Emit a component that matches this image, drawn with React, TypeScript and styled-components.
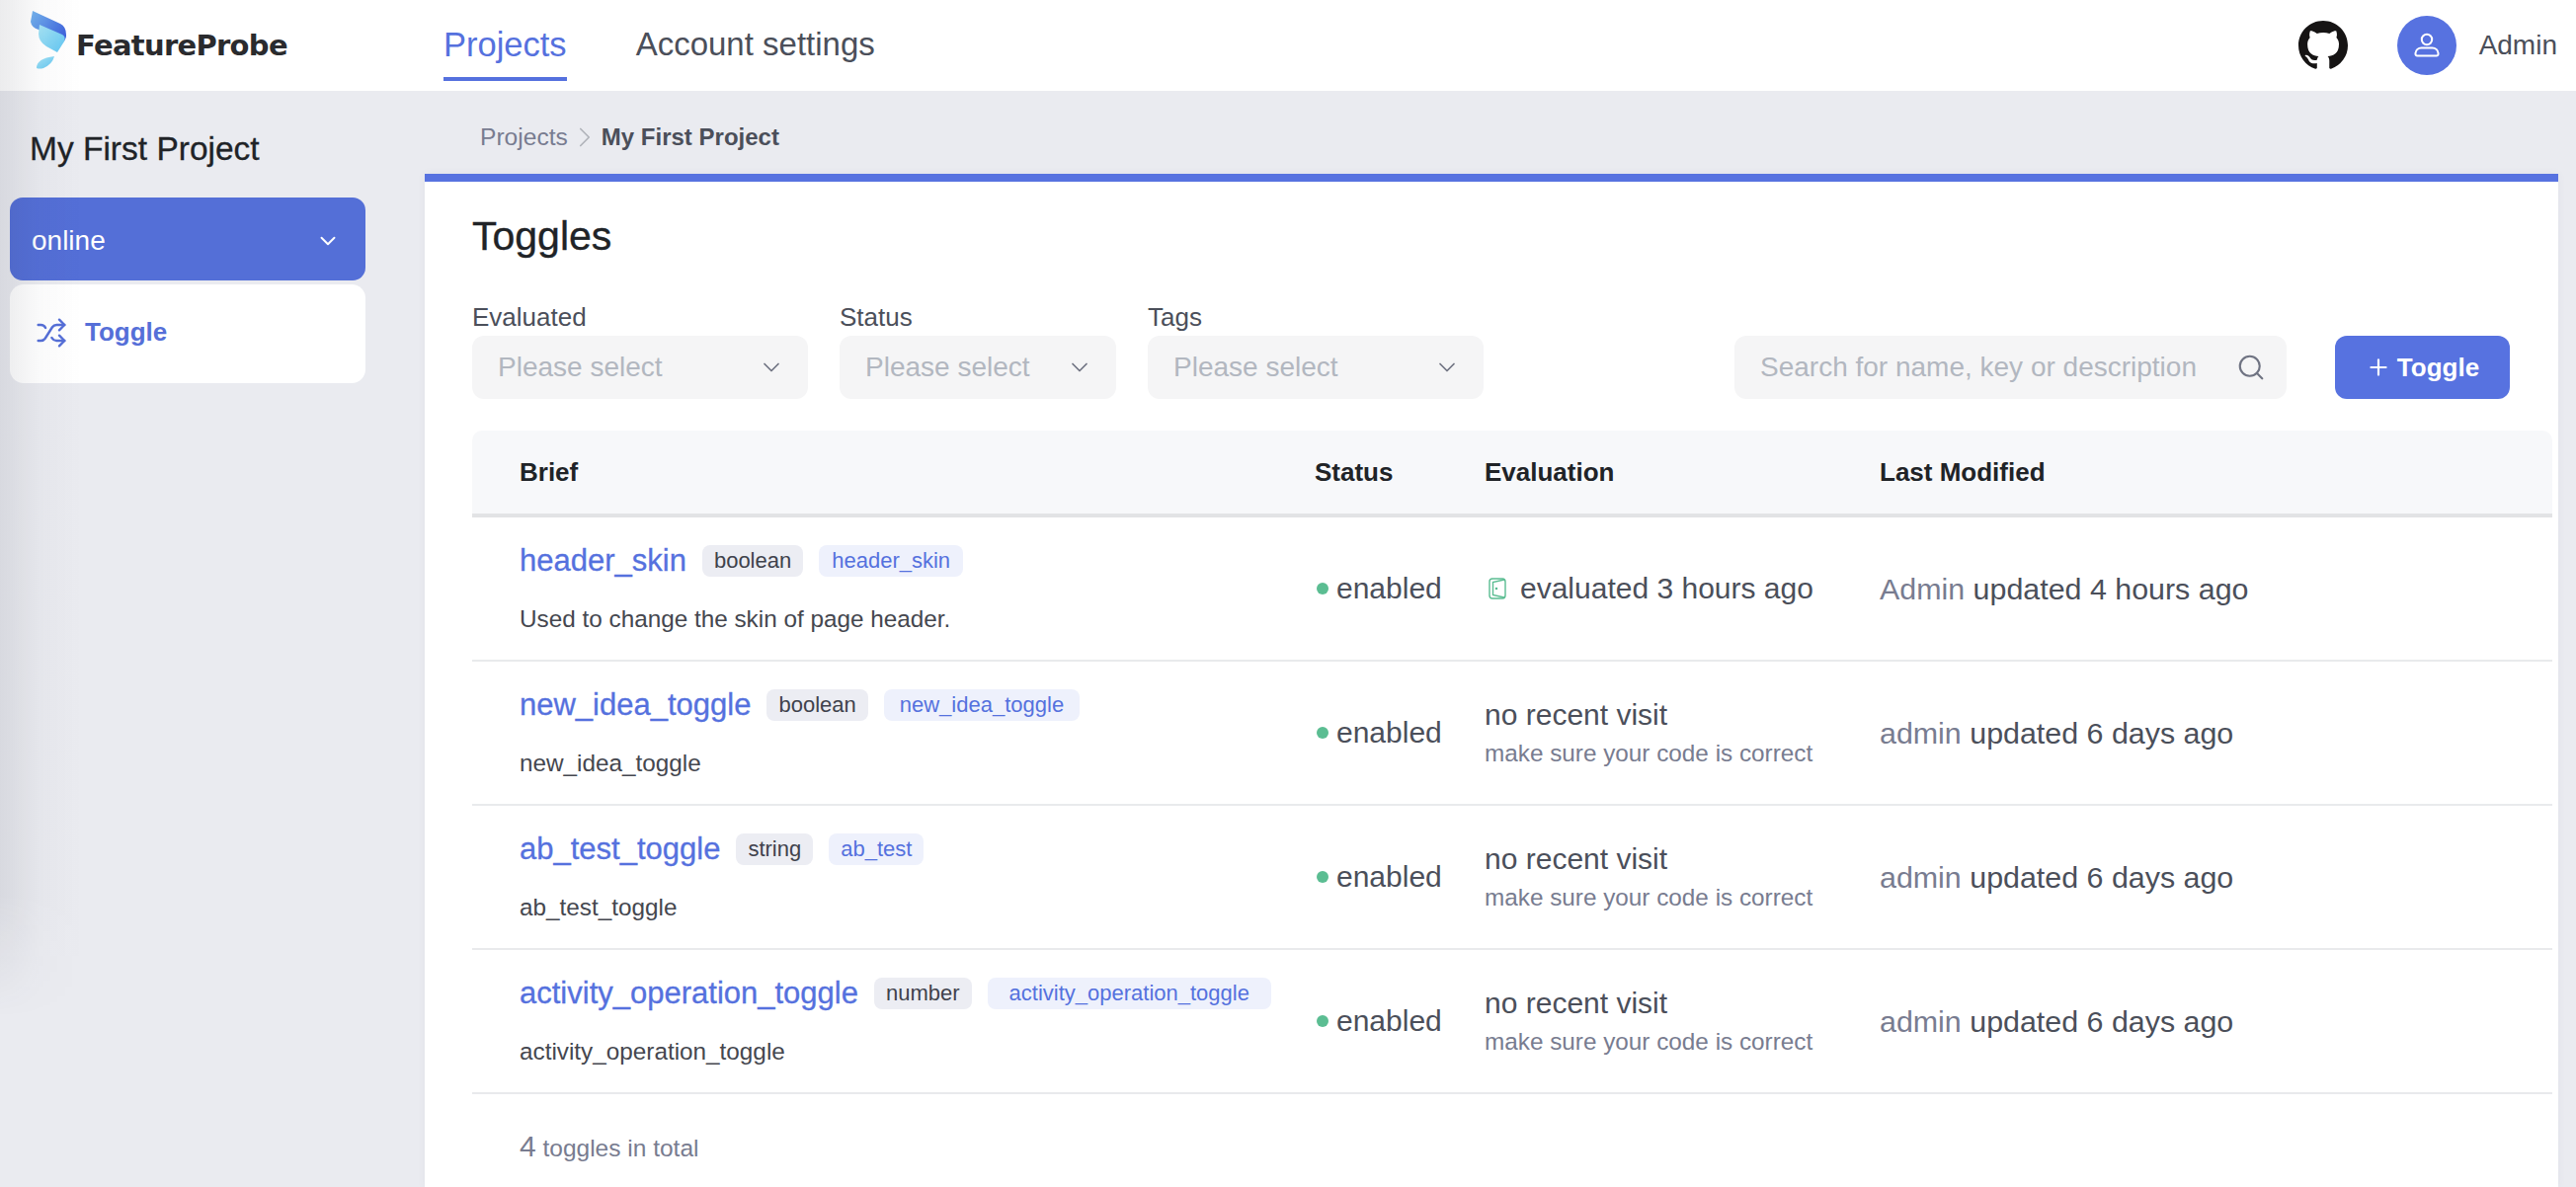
import React from 'react';
import styled, { createGlobalStyle, css } from 'styled-components';
import { ChevronDown, ChevronRight, Plus, Search, Shuffle } from 'lucide-react';

const GlobalStyle = createGlobalStyle`
  html, body {
    margin: 0;
    padding: 0;
    background: #eaebf0;
  }
  body {
    font-family: "Liberation Sans", Arial, sans-serif;
    color: #202327;
  }
  * {
    box-sizing: border-box;
  }
`;

const Page = styled.div`
  position: relative;
  width: 2608px;
  height: 1202px;
  overflow: hidden;
  display: flex;
  flex-direction: column;
`;

const EdgeShade = styled.div`
  position: absolute;
  left: 0;
  top: 0;
  width: 84px;
  height: 1030px;
  pointer-events: none;
  background: linear-gradient(
    90deg,
    rgba(40, 44, 60, 0.09),
    rgba(40, 44, 60, 0.07) 14px,
    rgba(40, 44, 60, 0.025) 40px,
    rgba(40, 44, 60, 0)
  );
  mask-image: linear-gradient(180deg, #000 88%, transparent 100%);
`;

const Header = styled.header`
  height: 92px;
  flex: none;
  background: #fff;
  display: flex;
  align-items: center;
  padding: 0 19px 0 31px;
`;

const Logo = styled.div`
  width: 418px;
  display: flex;
  align-items: center;
  gap: 10px;
`;

const LogoIcon = styled.svg`
  margin-bottom: 10px;
  flex: none;
`;

const LogoText = styled.span`
  font-family: "DejaVu Sans", sans-serif;
  font-size: 29px;
  font-weight: 700;
  letter-spacing: -0.7px;
  color: #2a2b2e;
`;

const Nav = styled.nav`
  display: flex;
  align-items: center;
  gap: 70px;
  height: 100%;
`;

const NavItem = styled.a<{ $active?: boolean }>`
  position: relative;
  font-size: ${({ $active }) => ($active ? '34.5px' : '33px')};
  color: ${({ $active }) => ($active ? '#5571de' : '#4b4f5a')};
  padding-bottom: 2px;

  ${({ $active }) =>
    $active &&
    css`
      &::after {
        content: '';
        position: absolute;
        left: 0;
        right: 0;
        bottom: -15px;
        height: 4px;
        background: #5571de;
      }
    `}
`;

const HeaderRight = styled.div`
  margin-left: auto;
  display: flex;
  align-items: center;
`;

const GithubLink = styled.a`
  display: flex;
  margin-right: 50px;
  color: #161414;
`;

const Avatar = styled.div`
  width: 60px;
  height: 60px;
  border-radius: 50%;
  background: #5772e0;
  color: #fff;
  display: flex;
  align-items: center;
  justify-content: center;
  margin-right: 23px;
`;

const UserName = styled.span`
  font-size: 28px;
  color: #4b4f5a;
`;

const Body = styled.div`
  flex: 1;
  display: flex;
  min-height: 0;
`;

const Sidebar = styled.aside`
  width: 430px;
  flex: none;
  padding: 0 60px 0 10px;
`;

const ProjectName = styled.h2`
  margin: 0;
  height: 108px;
  padding: 10px 0 0 20px;
  display: flex;
  align-items: center;
  font-size: 33.5px;
  font-weight: 400;
  color: #202327;
  -webkit-text-stroke: 0.3px #202327;
`;

const EnvSelect = styled.div`
  height: 84px;
  border-radius: 13px;
  background: #546fd7;
  color: #fff;
  display: flex;
  align-items: center;
  justify-content: space-between;
  padding: 3px 25px 0 22px;
  font-size: 28px;
`;

const MenuCard = styled.div`
  margin-top: 4px;
  height: 100px;
  border-radius: 14px;
  background: #fff;
  display: flex;
  align-items: center;
  gap: 18px;
  padding: 0 0 3px 26px;
  color: #556fd8;
  font-size: 26px;
  font-weight: 700;
`;

const Main = styled.main`
  flex: 1;
  min-width: 0;
  margin-right: 18px;
  display: flex;
  flex-direction: column;
`;

const Breadcrumb = styled.div`
  height: 84px;
  flex: none;
  display: flex;
  align-items: center;
  padding: 10px 0 0 56px;
  font-size: 24.6px;
  color: #787c90;
`;

const CrumbChevron = styled(ChevronRight)`
  color: #b0b3ba;
`;

const CrumbCurrent = styled.span`
  font-size: 24px;
  font-weight: 700;
  color: #4b4f5a;
`;

const Panel = styled.section`
  flex: 1;
  background: #fff;
  border-top: 8px solid #5772e0;
  padding: 0 6px 0 48px;
  box-shadow: 0 0 8px rgba(90, 80, 130, 0.06);
`;

const Title = styled.h1`
  margin: 0;
  height: 92px;
  padding-top: 18px;
  display: flex;
  align-items: center;
  font-size: 41px;
  font-weight: 400;
  color: #202327;
  -webkit-text-stroke: 0.35px #202327;
`;

const Filters = styled.div`
  display: flex;
  align-items: flex-end;
  height: 128px;
`;

const Field = styled.div<{ $width: number }>`
  width: ${({ $width }) => $width}px;
  margin-right: 32px;
  flex: none;
`;

const FieldLabel = styled.div`
  font-size: 26px;
  line-height: 30px;
  margin-bottom: 4px;
  color: #4b4f5a;
`;

const inputBox = css`
  height: 64px;
  border-radius: 12px;
  background: #f5f5f6;
  display: flex;
  align-items: center;
  justify-content: space-between;
  font-size: 28px;
  color: #b2b7c0;
`;

const SelectBox = styled.div`
  ${inputBox}
  padding: 0 23px 0 26px;
`;

const SearchBox = styled.div`
  ${inputBox}
  width: 559px;
  margin-left: auto;
  padding: 0 21px 0 26px;
`;

const AddButton = styled.button`
  width: 177px;
  height: 64px;
  margin: 0 43px 0 49px;
  flex: none;
  border: 0;
  border-radius: 12px;
  background: #5772e0;
  color: #fff;
  font: 700 26px "Liberation Sans", Arial, sans-serif;
  display: flex;
  align-items: center;
  justify-content: center;
  gap: 6px;
`;

const Table = styled.div`
  margin-top: 32px;
`;

const columns = css`
  display: grid;
  grid-template-columns: 805px 172px 400px 1fr;
  padding-left: 48px;
`;

const TableHead = styled.div`
  ${columns}
  height: 88px;
  align-items: center;
  background: #f7f8fa;
  border-bottom: 4px solid #e2e3e5;
  border-radius: 10px 10px 0 0;
  font-size: 26px;
  font-weight: 700;
  color: #202327;
`;

const Row = styled.div`
  ${columns}
  height: 146px;
  align-items: center;
  border-bottom: 2px solid #e9eaec;
`;

const Brief = styled.div`
  display: flex;
  flex-direction: column;
  gap: 26px;
`;

const BriefTop = styled.div`
  display: flex;
  align-items: center;
  gap: 16px;
`;

const ToggleName = styled.a`
  font-size: 31px;
  line-height: 36px;
  color: #5571de;
  -webkit-text-stroke: 0.3px #5571de;
`;

const Tag = styled.span<{ $variant: 'type' | 'key'; $pad?: number }>`
  height: 32px;
  border-radius: 8px;
  display: flex;
  align-items: center;
  font-size: 22px;
  padding: 0 ${({ $pad }) => $pad ?? 12}px;
  background: ${({ $variant }) => ($variant === 'type' ? '#ecedf3' : '#eef1fc')};
  color: ${({ $variant }) => ($variant === 'type' ? '#3f424c' : '#5571de')};
`;

const Description = styled.div`
  font-size: 24.3px;
  line-height: 30px;
  color: #45474f;
`;

const StatusCell = styled.div`
  display: flex;
  align-items: center;
  gap: 8px;
  font-size: 30px;
  color: #4b4f5a;
`;

const Dot = styled.i`
  width: 12px;
  height: 12px;
  margin-left: 2px;
  border-radius: 50%;
  background: #5bbd92;
`;

const Evaluated = styled.div`
  display: flex;
  align-items: center;
  gap: 14px;
  font-size: 30px;
  color: #4b4f5a;
  padding-left: 4px;
`;

const NoVisit = styled.div`
  font-size: 30px;
  line-height: 36px;
  color: #4b4f5a;
`;

const NoVisitHint = styled.div`
  font-size: 24.3px;
  line-height: 32px;
  margin-top: 5px;
  color: #787c90;
`;

const Modified = styled.div`
  font-size: 30.4px;
  color: #4b4f5a;
`;

const Modifier = styled.span`
  color: #787c90;
`;

const Footer = styled.div`
  padding: 36px 0 0 48px;
  font-size: 24.5px;
  color: #787c90;
`;

const FooterCount = styled.span`
  font-size: 30px;
`;

const LogoMark = () => (
  <LogoIcon width="36" height="60" viewBox="0 0 36 60">
    <defs>
      <linearGradient id="logoBack" x1="0" y1="0" x2="1" y2="0.6">
        <stop offset="0" stopColor="#76b7f0" />
        <stop offset="1" stopColor="#4167dd" />
      </linearGradient>
      <linearGradient id="logoFront" x1="0" y1="0" x2="1" y2="1">
        <stop offset="0" stopColor="#a9e6f6" />
        <stop offset="1" stopColor="#62c6f2" />
      </linearGradient>
    </defs>
    <path d="M2 0 L30 13 Q36 16 36 24 L36 26 Q35 31 31 33 L8 19 Q1 17 0 11 Z" fill="url(#logoBack)" />
    <path d="M9 14 L32 24 Q36 26 34 31 L27 42 L16 36 Q8 31 8 23 Z" fill="url(#logoFront)" />
    <path d="M6 58 Q6 48 24 46 Q22 54 13 58 Q9 59 6 58 Z" fill="url(#logoFront)" />
  </LogoIcon>
);

const GithubMark = () => (
  <svg width="50" height="50" viewBox="0 0 16 16" fill="currentColor">
    <path d="M8 0C3.58 0 0 3.58 0 8c0 3.54 2.29 6.53 5.47 7.59.4.07.55-.17.55-.38 0-.19-.01-.82-.01-1.49-2.01.37-2.53-.49-2.69-.94-.09-.23-.48-.94-.82-1.13-.28-.15-.68-.52-.01-.53.63-.01 1.08.58 1.23.82.72 1.21 1.87.87 2.33.66.07-.52.28-.87.51-1.07-1.78-.2-3.64-.89-3.64-3.95 0-.87.31-1.59.82-2.15-.08-.2-.36-1.02.08-2.12 0 0 .67-.21 2.2.82.64-.18 1.32-.27 2-.27.68 0 1.36.09 2 .27 1.53-1.04 2.2-.82 2.2-.82.44 1.1.16 1.92.08 2.12.51.56.82 1.27.82 2.15 0 3.07-1.87 3.75-3.65 3.95.29.25.54.73.54 1.48 0 1.07-.01 1.93-.01 2.2 0 .21.15.46.55.38A8.013 8.013 0 0016 8c0-4.42-3.58-8-8-8z" />
  </svg>
);

const UserIcon = () => (
  <svg width="26" height="26" viewBox="0 0 26 26" fill="none" stroke="currentColor" strokeWidth="2">
    <circle cx="13" cy="7" r="5.2" />
    <path d="M7.5 15.5 h11 a6 6 0 0 1 6 5.5 a2 2 0 0 1 -2 2.5 H3.5 a2 2 0 0 1 -2 -2.5 a6 6 0 0 1 6 -5.5 z" />
  </svg>
);

const DoorIcon = () => (
  <svg width="18" height="22" viewBox="0 0 18 22" fill="none" stroke="#5bbd92" strokeWidth="1.4">
    <rect x="1" y="1" width="16" height="20" rx="3" />
    <path d="M16 2 L4.5 4.5 V17.5 L16 20" />
    <circle cx="8" cy="11" r="0.6" />
  </svg>
);

const toggles = [
  { name: 'header_skin', type: 'boolean', tag: 'header_skin', tagPad: 13, desc: 'Used to change the skin of page header.', who: 'Admin', when: '4 hours', evaluated: '3 hours' },
  { name: 'new_idea_toggle', type: 'boolean', tag: 'new_idea_toggle', tagPad: 16, desc: 'new_idea_toggle', who: 'admin', when: '6 days' },
  { name: 'ab_test_toggle', type: 'string', tag: 'ab_test', tagPad: 12, desc: 'ab_test_toggle', who: 'admin', when: '6 days' },
  { name: 'activity_operation_toggle', type: 'number', tag: 'activity_operation_toggle', tagPad: 22, desc: 'activity_operation_toggle', who: 'admin', when: '6 days' },
];

const filters = [
  { label: 'Evaluated', width: 340 },
  { label: 'Status', width: 280 },
  { label: 'Tags', width: 340 },
];

export default function App() {
  return (
    <Page>
      <GlobalStyle />
      <Header>
        <Logo>
          <LogoMark />
          <LogoText>FeatureProbe</LogoText>
        </Logo>
        <Nav>
          <NavItem $active>Projects</NavItem>
          <NavItem>Account settings</NavItem>
        </Nav>
        <HeaderRight>
          <GithubLink>
            <GithubMark />
          </GithubLink>
          <Avatar>
            <UserIcon />
          </Avatar>
          <UserName>Admin</UserName>
        </HeaderRight>
      </Header>
      <Body>
        <Sidebar>
          <ProjectName>My First Project</ProjectName>
          <EnvSelect>
            online
            <ChevronDown size={26} strokeWidth={1.8} />
          </EnvSelect>
          <MenuCard>
            <Shuffle size={32} strokeWidth={1.8} />
            Toggle
          </MenuCard>
        </Sidebar>
        <Main>
          <Breadcrumb>
            Projects
            <CrumbChevron size={34} strokeWidth={1.2} />
            <CrumbCurrent>My First Project</CrumbCurrent>
          </Breadcrumb>
          <Panel>
            <Title>Toggles</Title>
            <Filters>
              {filters.map((filter) => (
                <Field key={filter.label} $width={filter.width}>
                  <FieldLabel>{filter.label}</FieldLabel>
                  <SelectBox>
                    Please select
                    <ChevronDown size={28} color="#6f7382" strokeWidth={1.5} />
                  </SelectBox>
                </Field>
              ))}
              <SearchBox>
                Search for name, key or description
                <Search size={30} color="#6f7382" strokeWidth={1.7} />
              </SearchBox>
              <AddButton>
                <Plus size={26} strokeWidth={2} />
                Toggle
              </AddButton>
            </Filters>
            <Table>
              <TableHead>
                <div>Brief</div>
                <div>Status</div>
                <div>Evaluation</div>
                <div>Last Modified</div>
              </TableHead>
              {toggles.map((toggle) => (
                <Row key={toggle.name}>
                  <Brief>
                    <BriefTop>
                      <ToggleName>{toggle.name}</ToggleName>
                      <Tag $variant="type">{toggle.type}</Tag>
                      <Tag $variant="key" $pad={toggle.tagPad}>{toggle.tag}</Tag>
                    </BriefTop>
                    <Description>{toggle.desc}</Description>
                  </Brief>
                  <StatusCell>
                    <Dot />
                    enabled
                  </StatusCell>
                  {toggle.evaluated ? (
                    <Evaluated>
                      <DoorIcon />
                      evaluated {toggle.evaluated} ago
                    </Evaluated>
                  ) : (
                    <div>
                      <NoVisit>no recent visit</NoVisit>
                      <NoVisitHint>make sure your code is correct</NoVisitHint>
                    </div>
                  )}
                  <Modified>
                    <Modifier>{toggle.who}</Modifier> updated {toggle.when} ago
                  </Modified>
                </Row>
              ))}
            </Table>
            <Footer>
              <FooterCount>4</FooterCount> toggles in total
            </Footer>
          </Panel>
        </Main>
      </Body>
      <EdgeShade />
    </Page>
  );
}
